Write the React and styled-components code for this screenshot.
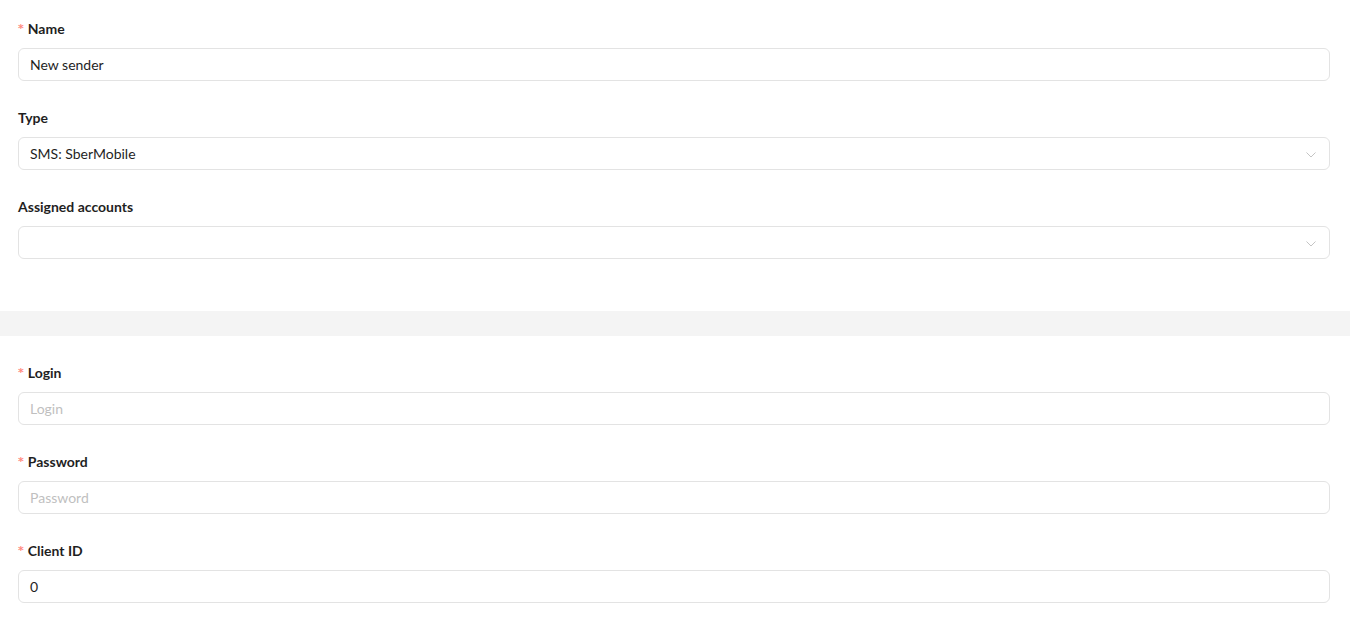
import styled, { createGlobalStyle } from 'styled-components';

const GlobalStyle = createGlobalStyle`
  body {
    margin: 0;
    background: #fff;
    font-family: Lato, 'Noto Sans', sans-serif;
    font-size: 14px;
    color: #1f1f1f;
  }
`;

const fieldsTop = [
  { label: 'Name', required: true, value: 'New sender' },
  { label: 'Type', value: 'SMS: SberMobile', select: true },
  { label: 'Assigned accounts', value: '', select: true },
];

const fieldsBottom = [
  { label: 'Login', required: true, placeholder: 'Login' },
  { label: 'Password', required: true, placeholder: 'Password' },
  { label: 'Client ID', required: true, value: '0' },
];

function Chevron() {
  return (
    <ChevronIcon width="12" height="12" viewBox="0 0 12 12" fill="none">
      <path d="M1.5 4.5l4.5 4.5 4.5-4.5" stroke="#c4c4c4" strokeWidth="1" />
    </ChevronIcon>
  );
}

function Field({ field }) {
  return (
    <FormItem>
      <Label>
        {field.required && <Star>*</Star>}
        {field.label}
      </Label>
      <InputBox>
        {field.value ? (
          <Value>{field.value}</Value>
        ) : (
          <Placeholder>{field.placeholder}</Placeholder>
        )}
        {field.select && <Chevron />}
      </InputBox>
    </FormItem>
  );
}

export default function App() {
  return (
    <Page>
      <GlobalStyle />
      <Section top>
        {fieldsTop.map(f => (
          <Field key={f.label} field={f} />
        ))}
      </Section>
      <Divider />
      <Section>
        {fieldsBottom.map(f => (
          <Field key={f.label} field={f} />
        ))}
      </Section>
    </Page>
  );
}

const Page = styled.div`
  width: 1350px;
  background: #fff;
`;

const Section = styled.section`
  padding: ${p => (p.top ? '17px 20px 27px 18px' : '25px 20px 0 18px')};
`;

const Divider = styled.div`
  height: 25px;
  background: #f4f4f4;
`;

const FormItem = styled.div`
  margin-bottom: 25px;
`;

const Label = styled.div`
  display: flex;
  align-items: center;
  height: 22px;
  margin-bottom: 9px;
  font-weight: 700;
  font-size: 14px;
  color: #1f1f1f;
`;

const Star = styled.span`
  color: #ff8a80;
  font-size: 11px;
  font-family: 'DejaVu Sans', sans-serif;
  margin-right: 4px;
  line-height: 1;
`;

const InputBox = styled.div`
  display: flex;
  align-items: center;
  justify-content: space-between;
  height: 33px;
  box-sizing: border-box;
  border: 1px solid #e3e3e3;
  border-radius: 6px;
  padding: 0 11px;
  font-size: 14px;
`;

const Value = styled.span`
  color: #1f1f1f;
`;

const Placeholder = styled.span`
  color: #bfbfbf;
`;

const ChevronIcon = styled.svg`
  margin-left: auto;
  margin-right: 1px;
`;
